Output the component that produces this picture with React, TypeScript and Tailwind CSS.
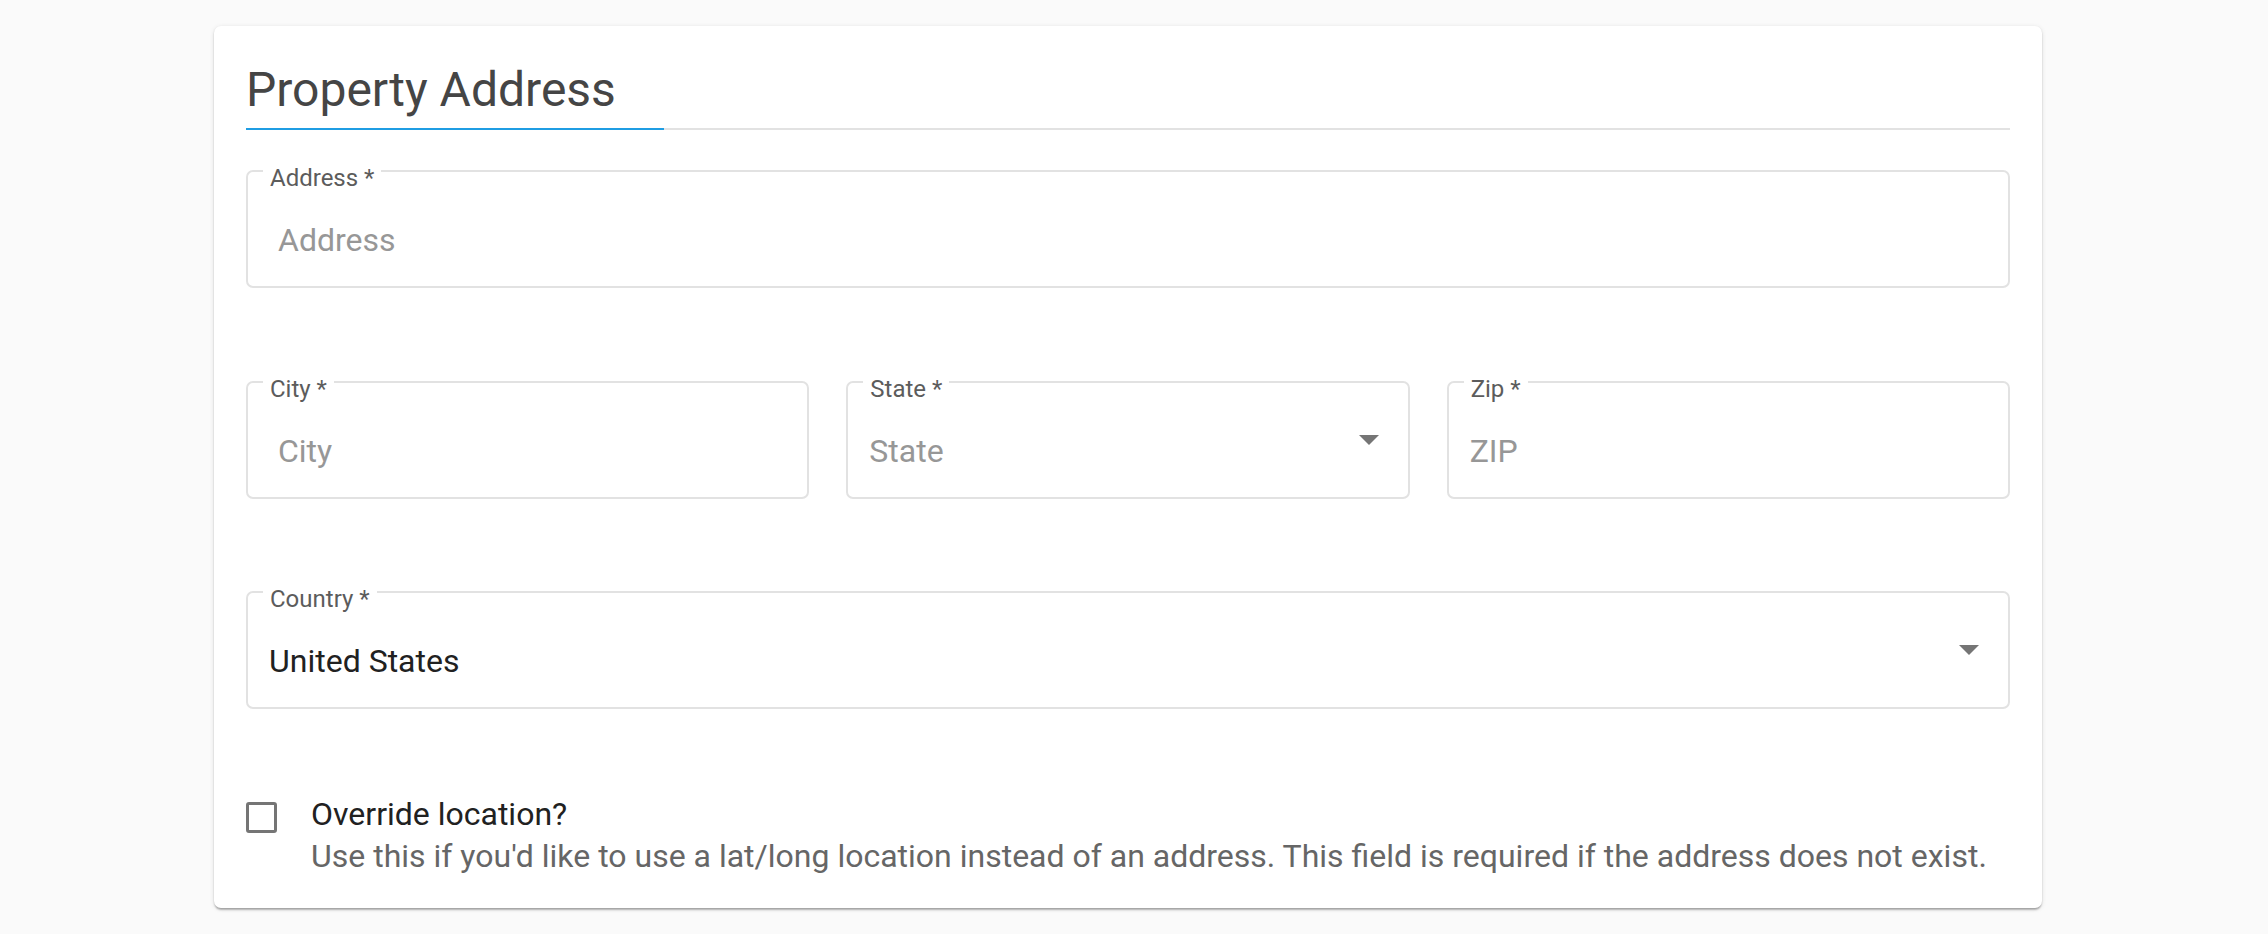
import React from 'react'

type FieldProps = {
  label: string
  value: string
  placeholder?: boolean
  indent?: 'wide' | 'narrow'
  select?: boolean
}

function Arrow() {
  return (
    <svg
      className="absolute right-[29px] top-1/2 -translate-y-1/2"
      width="20"
      height="10"
      viewBox="0 0 20 10"
    >
      <path d="M0 0h20L10 10z" fill="#757575" />
    </svg>
  )
}

function Field({ label, value, placeholder, indent = 'narrow', select }: FieldProps) {
  return (
    <div className="relative h-[118px] rounded-[7px] border-2 border-[#e2e2e2]">
      {/* Floating label over the notched border */}
      <span className="absolute left-[15px] top-[-6px] bg-white px-[7px] text-[24px] leading-[24px] text-[#5c5c5c]">
        {label}
      </span>
      <div
        className={
          (indent === 'wide' ? 'pl-[30px] ' : 'pl-[21px] ') +
          'pt-[50px] text-[32px] leading-[37px] ' +
          (placeholder ? 'text-[#979797]' : 'text-[#212121]')
        }
      >
        {value}
      </div>
      {select && <Arrow />}
    </div>
  )
}

export default function App() {
  return (
    <div className="min-h-screen bg-[#fafafa] pl-[214px] pt-[26px] font-[Roboto,sans-serif]">
      <div className="w-[1828px] rounded-[7px] bg-white px-[32px] pt-[36px] pb-[31px] shadow-[0_3px_2px_-1px_rgba(0,0,0,0.22),0_1px_2px_rgba(0,0,0,0.14),0_1px_5px_rgba(0,0,0,0.1)]">
        <h2 className="text-[48px] leading-[55px] text-[#454545]">Property Address</h2>
        <div className="mt-[11px] h-[2px] bg-[#e2e2e2]">
          <div className="h-full w-[418px] bg-[#1f9de3]" />
        </div>

        <div className="mt-[40px] flex flex-col gap-[92.5px]">
          <Field label="Address *" value="Address" placeholder indent="wide" />
          <div className="grid grid-cols-3 gap-[37px]">
            <Field label="City *" value="City" placeholder indent="wide" />
            <Field label="State *" value="State" placeholder select />
            <Field label="Zip *" value="ZIP" placeholder />
          </div>
          <Field label="Country *" value="United States" select />
        </div>

        {/* Override checkbox */}
        <div className="mt-[84px] flex items-start gap-[34px]">
          <div className="mt-[9px] h-[31px] w-[31px] shrink-0 rounded-[3px] border-[3px] border-[#757575]" />
          <div className="text-[32px] leading-[42px]">
            <div className="text-[#212121]">Override location?</div>
            <div className="text-[#666666]">
              Use this if you'd like to use a lat/long location instead of an address. This field is required if the address does not exist.
            </div>
          </div>
        </div>
      </div>
    </div>
  )
}
